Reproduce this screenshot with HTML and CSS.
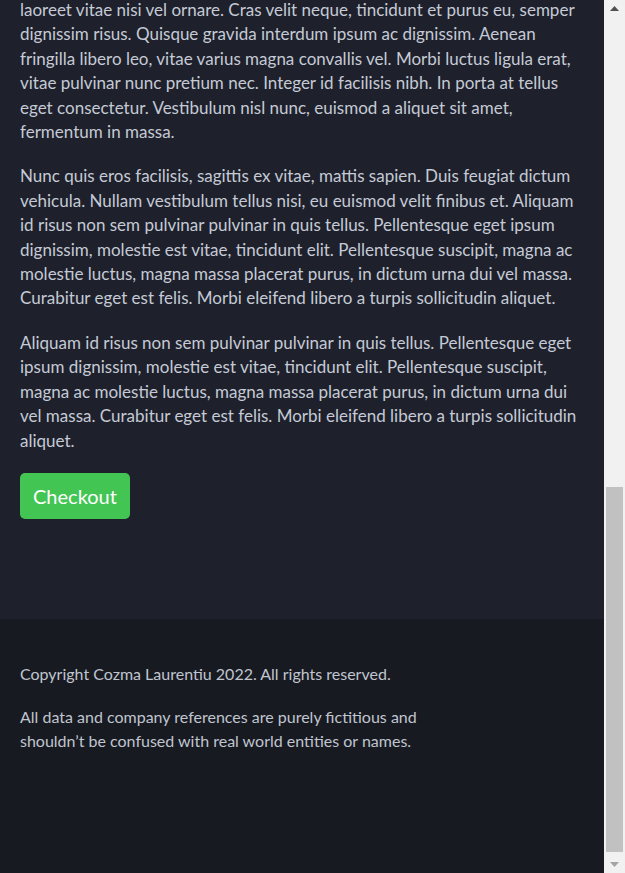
FILE: index.html
```html
<!DOCTYPE html>
<html lang="en">
<head>
<meta charset="utf-8">
<title>Checkout</title>
<link rel="stylesheet" href="styles.css">
</head>
<body>
<div class="window">
  <main class="page">
    <section class="content">
      <p>laoreet vitae nisi vel ornare. Cras velit neque, tincidunt et purus eu, semper dignissim risus. Quisque gravida interdum ipsum ac dignissim. Aenean fringilla libero leo, vitae varius magna convallis vel. Morbi luctus ligula erat, vitae pulvinar nunc pretium nec. Integer id facilisis nibh. In porta at tellus eget consectetur. Vestibulum nisl nunc, euismod a aliquet sit amet, fermentum in massa.</p>
      <p>Nunc quis eros facilisis, sagittis ex vitae, mattis sapien. Duis feugiat dictum vehicula. Nullam vestibulum tellus nisi, eu euismod velit finibus et. Aliquam id risus non sem pulvinar pulvinar in quis tellus. Pellentesque eget ipsum dignissim, molestie est vitae, tincidunt elit. Pellentesque suscipit, magna ac molestie luctus, magna massa placerat purus, in dictum urna dui vel massa. Curabitur eget est felis. Morbi eleifend libero a turpis sollicitudin aliquet.</p>
      <p>Aliquam id risus non sem pulvinar pulvinar in quis tellus. Pellentesque eget ipsum dignissim, molestie est vitae, tincidunt elit. Pellentesque suscipit, magna ac molestie luctus, magna massa placerat purus, in dictum urna dui vel massa. Curabitur eget est felis. Morbi eleifend libero a turpis sollicitudin aliquet.</p>
      <button class="btn" type="button">Checkout</button>
    </section>
    <footer class="footer">
      <div class="footer-inner">
        <p>Copyright Cozma Laurentiu 2022. All rights reserved.</p>
        <p>All data and company references are purely fictitious and shouldn’t be confused with real world entities or names.</p>
      </div>
    </footer>
  </main>
  <div class="scrollbar" aria-hidden="true">
    <div class="sb-btn">
      <svg class="sb-arrow" width="9" height="5" viewBox="0 0 9 5"><polygon points="0,5 9,5 4.5,0" fill="#505050"/></svg>
    </div>
    <div class="sb-track"><div class="sb-thumb"></div></div>
    <div class="sb-btn">
      <svg class="sb-arrow" width="9" height="5" viewBox="0 0 9 5"><polygon points="0,0 9,0 4.5,5" fill="#a3a3a3"/></svg>
    </div>
  </div>
</div>
</body>
</html>
```
FILE: styles.css
```css
html, body {
  margin: 0;
  padding: 0;
}
body {
  background: #1e212b;
  color: #c5cad6;
  font-family: "Lato", "Noto Sans", sans-serif;
}
.window {
  display: flex;
  height: 873px;
  overflow: hidden;
}
.page {
  flex: 1;
  min-width: 0;
  display: flex;
  flex-direction: column;
}
.content {
  background: #1e212b;
  margin-top: -2px;
  padding: 0 15px 100px 20px;
  font-size: 17px;
  line-height: 24.4px;
}
.content p {
  margin: 0 0 20px;
}
.btn {
  display: block;
  background: #43c553;
  color: #ffffff;
  border: 0;
  border-radius: 5px;
  font-family: inherit;
  font-size: 20px;
  line-height: 26px;
  padding: 10px 13px;
  cursor: pointer;
}
.footer {
  flex: 1;
  background: #171a21;
  padding: 43px 20px 0;
  color: #c0c5cf;
  font-size: 16px;
  line-height: 24px;
}
.footer-inner {
  max-width: 420px;
}
.footer p {
  margin: 0 0 19px;
}
.scrollbar {
  width: 21px;
  flex: 0 0 21px;
  background: #f1f1f1;
  display: flex;
  flex-direction: column;
}
.sb-btn {
  height: 17px;
  flex: 0 0 17px;
  display: flex;
  align-items: center;
  justify-content: center;
}
.sb-arrow {
  display: block;
}
.sb-track {
  flex: 1;
  display: flex;
  flex-direction: column;
  justify-content: flex-end;
  padding: 0 2px 4px;
}
.sb-thumb {
  height: 365px;
  background: #c1c1c1;
}
```
